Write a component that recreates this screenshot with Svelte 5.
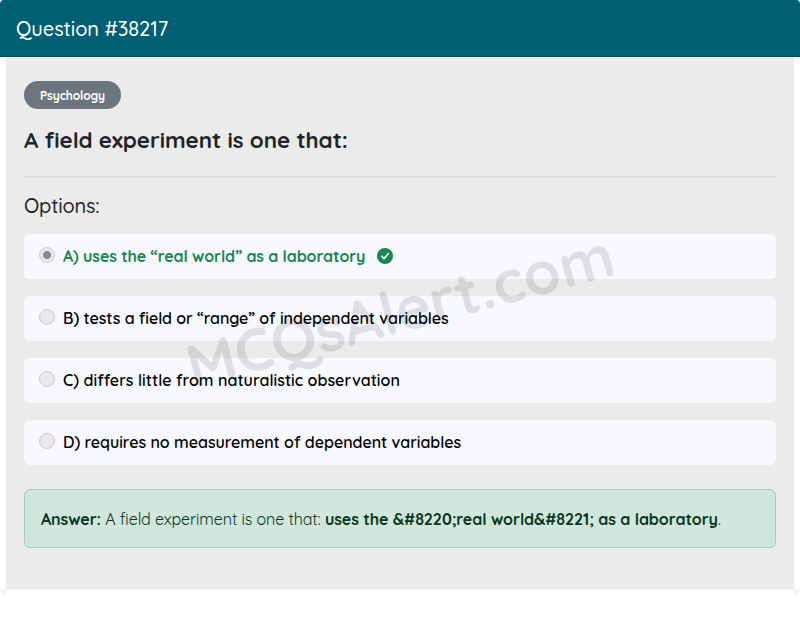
<script>
    let question = {
        id: 38217,
        category: "Psychology",
        text: "A field experiment is one that:",
        answer: "uses the &#8220;real world&#8221; as a laboratory"
    }

    let options = [
        {
            label: "A) uses the “real world” as a laboratory",
            name: "a",
            correct: true
        },
        {
            label: "B) tests a field or “range” of independent variables",
            name: "b"
        },
        {
            label: "C) differs little from naturalistic observation",
            name: "c"
        },
        {
            label: "D) requires no measurement of dependent variables",
            name: "d"
        }
    ]
</script>

<div class="card">
    <div class="card-header">
        <span class="title">Question #{question.id}</span>
    </div>

    <div class="card-body">
        <span class="badge"><span>{question.category}</span></span>
        <h1><span>{question.text}</span></h1>
        <hr>
        <h2><span>Options:</span></h2>

        <ul>
            {#each options as option}
                <li class="option {option.name}" class:correct={option.correct}>
                    <span class="radio"></span>
                    <span class="label">{option.label}</span>
                    {#if option.correct}
                        <svg width="16" height="16" viewBox="0 0 16 16">
                            <circle cx="8" cy="8" r="8" fill="#198754" />
                            <path d="M4.8 8.3l2.3 2.3 4.2-4.9" fill="none" stroke="#fff" stroke-width="1.6" stroke-linecap="round" stroke-linejoin="round" />
                        </svg>
                    {/if}
                </li>
            {/each}
        </ul>

        <div class="answer">
            <p><strong class="lead">Answer:</strong> <span class="stem">{question.text}</span> <strong class="text">{question.answer}</strong>.</p>
        </div>
    </div>

    <div class="card-footer">
        <span class="corner left"></span>
        <span class="corner right"></span>
    </div>

    <div class="watermark">MCQsAlert.com</div>
</div>

<style>
    :global(body) {
        background: #fff;
    }

    .card {
        position: relative;
        height: 620px;
        overflow: hidden;
        font-family: Quicksand, Lato, sans-serif;
        color: #212529;
        white-space: nowrap;
    }

    .card-header {
        box-sizing: border-box;
        height: 57px;
        padding: 14px 16px;
        background: #005f73;
        border-bottom: 1px solid #00505f;
        border-radius: 4px 4px 0 0;
        color: #fff;
        font-size: 20px;
        font-weight: 500;
        line-height: 30px;
        letter-spacing: -0.05px;
    }

    .card-body {
        box-sizing: border-box;
        height: 532px;
        margin: 0 6px;
        padding: 24px 18px 0;
        background: #ebebeb;
    }

    .badge {
        box-sizing: border-box;
        display: flex;
        justify-content: center;
        width: 97px;
        height: 28px;
        padding-top: 1px;
        border-radius: 14px;
        background: #6c757d;
        color: #fff;
        font-size: 12px;
        font-weight: 700;
        line-height: 28px;
        letter-spacing: -0.1px;
    }

    h1 {
        margin: 17px 0 0;
        font-size: 22.4px;
        font-weight: 700;
        line-height: 29px;
        letter-spacing: -0.03px;
    }

    hr {
        height: 2px;
        margin: 21px 0 16px;
        border: 0;
        background: #dedede;
    }

    h2 {
        margin: 0;
        font-size: 20px;
        font-weight: 500;
        line-height: 24px;
        letter-spacing: -0.2px;
    }

    ul {
        display: flex;
        flex-direction: column;
        gap: 17px;
        margin: 16px 0 0;
        padding: 0;
        list-style: none;
    }

    .option {
        display: flex;
        align-items: center;
        height: 45px;
        padding-left: 15px;
        border-radius: 6px;
        background: #f8f9fe;
        color: #000;
        font-size: 16px;
        font-weight: 600;
    }

    .label {
        margin-top: -2px;
    }

    .radio {
        box-sizing: border-box;
        width: 16px;
        height: 16px;
        margin: -3px 8px 0 0;
        border: 1px solid #cbcbcd;
        border-radius: 50%;
        background: #e9e9eb;
    }

    .b .label {
        letter-spacing: -0.08px;
    }

    .c .label {
        letter-spacing: 0.02px;
    }

    .d .label {
        letter-spacing: -0.05px;
    }

    .correct {
        color: #198754;
        font-weight: 700;
    }

    .correct .label {
        letter-spacing: -0.12px;
    }

    .correct .radio {
        background: radial-gradient(circle, #888 3.7px, #e9e9eb 4.3px);
    }

    .correct svg {
        margin: -1px 0 0 12px;
    }

    .answer {
        box-sizing: border-box;
        height: 59px;
        margin-top: 24px;
        padding: 0 16px;
        border: 1px solid #a3cfbb;
        border-radius: 6px;
        background: #d1e7dd;
        color: #0a3622;
        font-size: 16px;
        font-weight: 400;
    }

    .answer p {
        margin: 0;
        line-height: 58px;
    }

    .answer strong {
        font-weight: 700;
    }

    .answer .lead {
        letter-spacing: -0.1px;
    }

    .answer .stem {
        letter-spacing: -0.1px;
    }

    .answer .text {
        letter-spacing: -0.07px;
    }

    .card-footer {
        display: flex;
        justify-content: space-between;
        height: 6px;
        border-top: 1px solid #f7f7f7;
    }

    .corner {
        width: 6px;
        height: 5px;
        background: #f2f2f2;
    }

    .left {
        border-bottom-left-radius: 6px;
    }

    .right {
        border-bottom-right-radius: 6px;
    }

    .watermark {
        position: absolute;
        top: 50%;
        left: 50%;
        transform: translate(-50%, -50%) rotate(-15deg);
        color: rgba(0, 0, 0, 0.1);
        font-size: 60px;
        font-weight: 700;
        line-height: 80px;
    }
</style>
